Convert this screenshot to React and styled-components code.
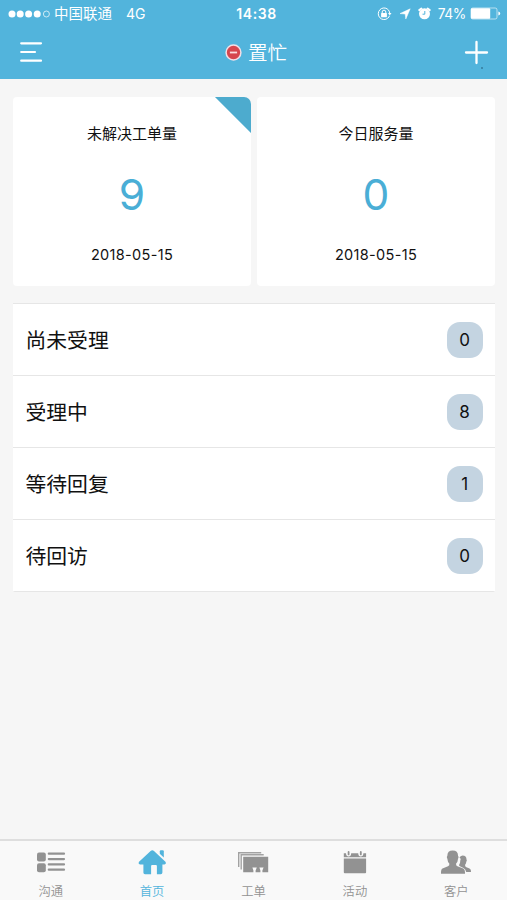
import React from 'react'
import styled, { createGlobalStyle } from 'styled-components'

const GlobalStyle = createGlobalStyle`
  * {
    box-sizing: border-box;
  }

  body {
    margin: 0;
    background: #f6f6f6;
    font-family: Inter, 'Noto Sans CJK SC', sans-serif;
  }

  svg {
    display: block;
    flex: none;
  }
`

const Screen = styled.div`
  display: flex;
  flex-direction: column;
  width: 507px;
  height: 900px;
  overflow: hidden;
  background: #f6f6f6;
  color: #111;
`

const Header = styled.header`
  height: 79px;
  background: #52b4dc;
  color: #fff;
`

const StatusBar = styled.div`
  display: grid;
  grid-template-columns: 1fr auto 1fr;
  align-items: center;
  height: 27px;
  padding: 0 6px 0 8px;
  font-size: 14.5px;
  line-height: 20px;
`

const Carrier = styled.div`
  display: flex;
  align-items: center;
`

const CarrierName = styled.span`
  margin: 0 14px 0 4px;
`

const Network = styled.span`
  font-size: 14px;
`

const Clock = styled.span`
  padding-left: 4px;
  font-size: 14px;
  font-weight: 600;
  letter-spacing: 0.55px;
`

const Indicators = styled.div`
  display: flex;
  align-items: center;
  justify-content: flex-end;
`

const IndicatorIcons = styled.div`
  display: flex;
  align-items: center;
  gap: 7px;
`

const Percent = styled.span`
  margin: 0 4px 0 7px;
  font-size: 13.8px;
  letter-spacing: -0.4px;
`

const NavBar = styled.div`
  display: grid;
  grid-template-columns: 1fr auto 1fr;
  align-items: center;
  height: 50px;
  padding: 0 19px 0 20px;
`

const Title = styled.h1`
  display: flex;
  align-items: center;
  gap: 6px;
  margin: 0;
  padding: 2px 0 0 4px;
  font-size: 19.5px;
  font-weight: 350;
  line-height: 30px;

  svg {
    margin-top: -2px;
  }
`

const AddButton = styled.div`
  justify-self: end;
`

const Main = styled.main`
  flex: 1;
  padding: 18px 12px 0 13px;
`

const Cards = styled.div`
  display: grid;
  grid-template-columns: 238px 238px;
  gap: 6px;
`

const Card = styled.section`
  display: flex;
  flex-direction: column;
  align-items: center;
  height: 189px;
  padding-top: 26px;
  border-radius: ${props => (props.$flagged ? '4px 7px 4px 4px' : '4px')};
  overflow: hidden;
  background: ${props =>
    props.$flagged
      ? 'linear-gradient(225deg, #4dabce 25.1px, #fff 25.9px)'
      : '#fff'};
`

const CardTitle = styled.div`
  font-size: 15px;
  line-height: 22px;
`

const CardValue = styled.div`
  margin-top: 25px;
  color: #4aaed6;
  font-size: 42.5px;
  font-weight: 375;
  line-height: 50px;
`

const CardDate = styled.div`
  margin-top: 24px;
  font-size: 14.5px;
  letter-spacing: 0.32px;
  line-height: 22px;
`

const List = styled.ul`
  margin: 17px 0 0;
  padding: 0;
  border-bottom: 1px solid #e6e6e6;
  border-radius: 2px;
  list-style: none;
`

const Row = styled.li`
  display: flex;
  align-items: center;
  justify-content: space-between;
  height: 71.9px;
  padding: 0 12.4px 0 12.5px;
  border-top: 1px solid #e6e6e6;
  background: #fff;
  font-size: 20.8px;
`

const RowLabel = styled.span`
  padding-top: 3px;
  line-height: 30px;
`

const Badge = styled.span`
  display: flex;
  align-items: center;
  justify-content: center;
  width: 36px;
  height: 36px;
  margin-top: 1px;
  border-radius: 13px;
  background: #c4d4e1;
  font-size: 17px;
`

const TabBar = styled.nav`
  display: grid;
  grid-template-columns: repeat(5, 1fr);
  height: 61px;
  border-top: 2px solid #dedede;
  background: #f9f9f9;
`

const Tab = styled.div`
  display: flex;
  flex-direction: column;
  align-items: center;
  padding-top: 8px;
  color: ${props => (props.$active ? '#52b4dc' : '#929292')};
  font-size: 12.3px;
  font-weight: 350;
  line-height: 18px;

  svg {
    margin-bottom: 6px;
  }
`

const SignalIcon = () => (
  <svg width="42" height="10" fill="#fff">
    {[4, 12.2, 20.6, 29.2].map(x => (
      <circle key={x} cx={x} cy="5" r="3.5" />
    ))}
    <circle cx="38.4" cy="5" r="3" fill="none" stroke="#fff" strokeWidth="0.7" />
  </svg>
)

const RotationLockIcon = () => (
  <svg width="15" height="14" fill="none" stroke="#fff">
    <path d="M10.8 2.3A5.8 5.8 0 1 0 10.8 11.2" />
    <path d="M11 2.5A5.8 5.8 0 0 1 12.7 6M11 11A5.8 5.8 0 0 0 12.5 8.8" />
    <path d="M11 6h3.5l-1.8 2.5z" fill="#fff" stroke="none" />
    <rect x="4.1" y="6" width="5.8" height="4.2" rx=".5" fill="#fff" stroke="none" />
    <path d="M5.2 6.3V5a1.8 1.8 0 0 1 3.6 0v1.3" />
  </svg>
)

const LocationIcon = () => (
  <svg width="12" height="12" fill="#fff" stroke="#fff" strokeWidth=".5">
    <path d="M11.2.8 6.8 11 6.2 6 1 5.6z" />
  </svg>
)

const AlarmIcon = () => (
  <svg width="13" height="13" viewBox="0 0 13 13">
    <circle cx="6.5" cy="6.8" r="5.5" fill="#fff" />
    <path
      d="M1.3 3.1 3.4 1.5M11.7 3.1 9.6 1.5"
      stroke="#fff"
      strokeWidth="2"
      strokeLinecap="round"
    />
    <path d="M6.8 4v3.2H4.5" fill="none" stroke="#52b4dc" strokeWidth="1" />
  </svg>
)

const BatteryIcon = () => (
  <svg width="31" height="13" fill="#fff">
    <rect x="1" y="1" width="26" height="11" rx="1.8" fill="none" stroke="#fff" strokeWidth=".6" />
    <rect x="1" y="1.2" width="19.2" height="10.6" rx="1" />
    <path d="M28.4 4.5q1.8.4 1.8 2t-1.8 2z" />
  </svg>
)

const MenuIcon = () => (
  <svg width="23" height="22" stroke="#fff" strokeWidth="2.2" strokeLinecap="round">
    <path d="M1.2 2.3H21M1.2 11H15M1.2 19.7H21" />
  </svg>
)

const BusyIcon = () => (
  <svg width="17" height="17">
    <circle cx="8.5" cy="8.5" r="7.4" fill="#d6464e" stroke="#f2dfe7" strokeWidth="1.5" />
    <path d="M4.9 8.5h7.2" stroke="#fbdde0" strokeWidth="1.8" />
  </svg>
)

const PlusIcon = () => (
  <svg width="23" height="23" overflow="visible">
    <path d="M11.5 1v21M1 11.5h21" stroke="#fff" strokeWidth="2.3" strokeLinecap="round" />
    <circle cx="17" cy="27" r="1" fill="#367b9c" />
  </svg>
)

const ChatIcon = () => (
  <svg width="30" height="28" fill="#929292">
    <rect x="1" y="3.5" width="8.8" height="9" rx="2" />
    <rect x="1" y="14.3" width="8.8" height="9" rx="2" />
    <path
      d="M12.8 4.7H28M12.8 10.1H28M12.8 15.4H28M12.8 20.7H28"
      stroke="#929292"
      strokeWidth="2.2"
      strokeLinecap="round"
    />
  </svg>
)

const HomeIcon = () => (
  <svg width="30" height="28" fill="#52b4dc">
    <path d="M13.6 1.9q1.7-1.5 3.4 0L28.7 13q.8 2-1.2 2.6h-2.1v8q0 1.6-1.6 1.6h-3.9v-8.1q0-1-1-1h-3.8q-1 0-1 1v8.1H8q-1.6 0-1.6-1.6v-8H3Q1 15 1.8 13z" />
    <path d="M22.8 2.2q0-1 1-1h2q1 0 1 1V8.6l-4-3.8z" />
  </svg>
)

const TicketIcon = () => (
  <svg width="32" height="28" fill="#929292">
    <path d="M1.7 18V3.7h22.5M4.2 20.5V5.8h22.5" fill="none" stroke="#a2a2a2" strokeWidth="1.4" />
    <path d="M6.2 7.7h25v15.5h-5.8v-1.7l1.2-2.9h-4.2l1 2.9v1.7h-4.8v-1.7l1.2-2.9h-4.4l1 2.9v1.7H6.2z" />
  </svg>
)

const CalendarIcon = () => (
  <svg width="26" height="28" fill="#929292">
    <path d="M1.8 4.2H4q.2 3.2 2.6 3.2T9.2 4.2h7q.2 3.2 2.6 3.2t2.6-3.2h2.7v4.1H1.8z" />
    <path d="M6.6 3v2.4M18.8 3v2.4" stroke="#929292" strokeWidth="1.8" strokeLinecap="round" />
    <path d="M1.8 9.4h22.3v13.9q0 1-1 1H2.8q-1 0-1-1z" />
  </svg>
)

const CustomersIcon = () => (
  <svg width="32" height="28" fill="#929292">
    <path d="M1 24.7q-.2-4.4 1.5-5.2l5.5-2.2q1.8-.8 1.3-2.8-1.7-1.6-1.9-4.6-1.2-2.3-.1-3Q7.4 1.5 12.7 1.5t5.4 5.4q1.1.7-.1 3-.2 3-1.9 4.6-.5 2 1.3 2.8l5.8 2.2q2 1 1.8 5.2z" />
    <path d="M19.4 8.9q.8-2.5 3.1-2.5 4 0 4 4.1.8.8-.2 2.2-.2 2-1.2 3.1-.2 1.5.8 2.1l3.6 1.7q1.8.8 1.5 3.3h-4.8q-.6-3-2.8-4l-4-1.8q-.4-.4-.2-1.6 1.2-2 1.1-4 1-2-.3-2.6z" />
  </svg>
)

const cards = [
  { title: '未解决工单量', value: 9, date: '2018-05-15', flagged: true },
  { title: '今日服务量', value: 0, date: '2018-05-15' },
]

const rows = [
  { label: '尚未受理', count: 0 },
  { label: '受理中', count: 8 },
  { label: '等待回复', count: 1 },
  { label: '待回访', count: 0 },
]

const tabs = [
  { label: '沟通', Icon: ChatIcon },
  { label: '首页', Icon: HomeIcon, active: true },
  { label: '工单', Icon: TicketIcon },
  { label: '活动', Icon: CalendarIcon },
  { label: '客户', Icon: CustomersIcon },
]

const App = () => {
  return (
    <>
      <GlobalStyle />
      <Screen>
        <Header>
          <StatusBar>
            <Carrier>
              <SignalIcon />
              <CarrierName>中国联通</CarrierName>
              <Network>4G</Network>
            </Carrier>
            <Clock>14:38</Clock>
            <Indicators>
              <IndicatorIcons>
                <RotationLockIcon />
                <LocationIcon />
                <AlarmIcon />
              </IndicatorIcons>
              <Percent>74%</Percent>
              <BatteryIcon />
            </Indicators>
          </StatusBar>
          <NavBar>
            <MenuIcon />
            <Title>
              <BusyIcon />
              置忙
            </Title>
            <AddButton>
              <PlusIcon />
            </AddButton>
          </NavBar>
        </Header>
        <Main>
          <Cards>
            {cards.map(card => (
              <Card key={card.title} $flagged={card.flagged}>
                <CardTitle>{card.title}</CardTitle>
                <CardValue>{card.value}</CardValue>
                <CardDate>{card.date}</CardDate>
              </Card>
            ))}
          </Cards>
          <List>
            {rows.map(row => (
              <Row key={row.label}>
                <RowLabel>{row.label}</RowLabel>
                <Badge>{row.count}</Badge>
              </Row>
            ))}
          </List>
        </Main>
        <TabBar>
          {tabs.map(({ label, Icon, active }) => (
            <Tab key={label} $active={active}>
              <Icon />
              {label}
            </Tab>
          ))}
        </TabBar>
      </Screen>
    </>
  )
}

export default App
